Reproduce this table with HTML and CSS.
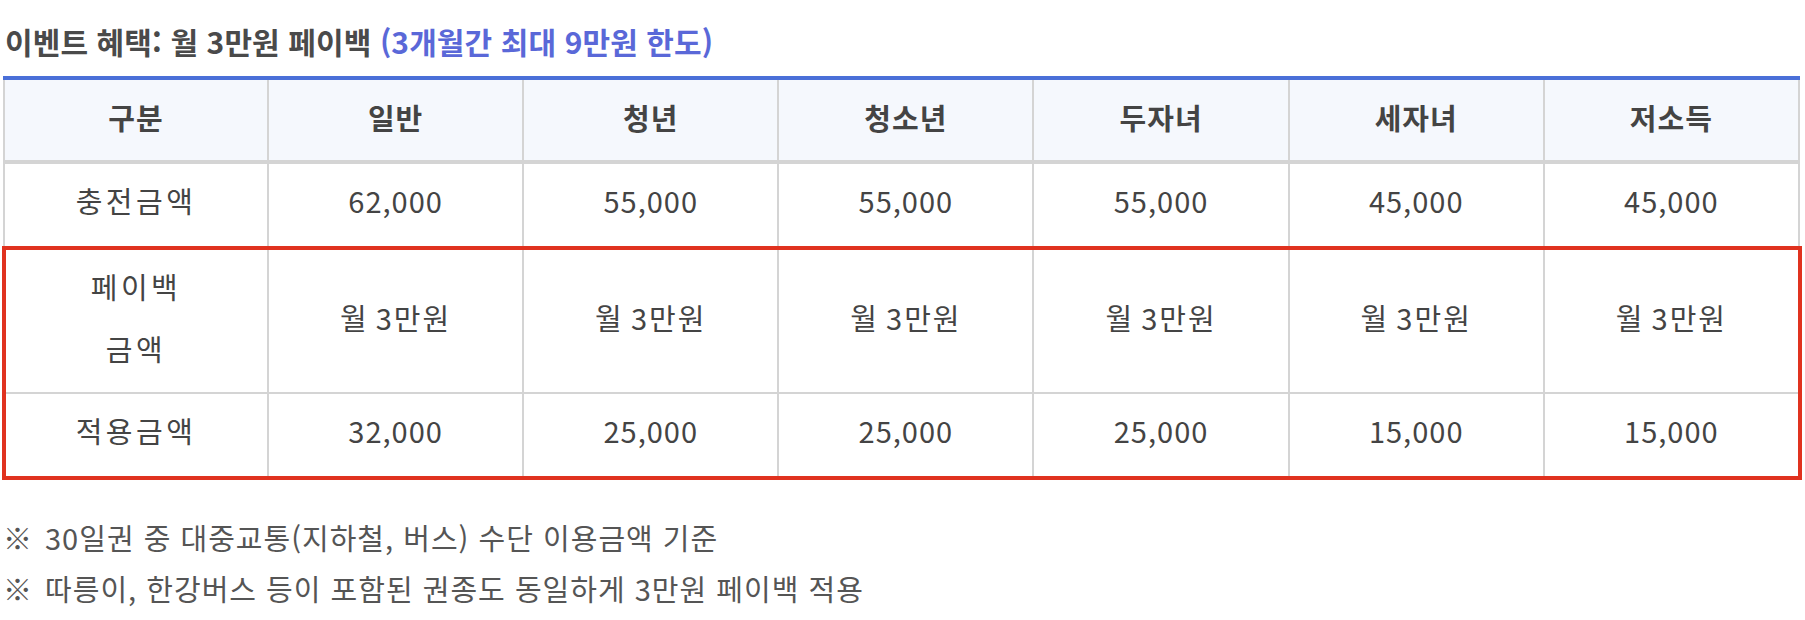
FILE: index.html
```html
<!DOCTYPE html>
<html lang="ko">
<head>
<meta charset="utf-8">
<title>이벤트 혜택</title>
<link rel="stylesheet" href="styles.css">
</head>
<body>
<div class="page">
  <h3 class="title">이벤트 혜택: 월 3만원 페이백 <span class="accent">(3개월간 최대 9만원 한도)</span></h3>
  <div class="table-wrap">
    <table class="benefit">
      <colgroup>
        <col class="col-first">
        <col><col><col><col><col><col>
      </colgroup>
      <thead>
        <tr>
          <th>구분</th><th>일반</th><th>청년</th><th>청소년</th><th>두자녀</th><th>세자녀</th><th>저소득</th>
        </tr>
      </thead>
      <tbody>
        <tr class="row-single">
          <td class="label">충전금액</td><td>62,000</td><td>55,000</td><td>55,000</td><td>55,000</td><td>45,000</td><td>45,000</td>
        </tr>
        <tr class="row-double">
          <td class="label">페이백<br>금액</td><td class="won">월 3만원</td><td class="won">월 3만원</td><td class="won">월 3만원</td><td class="won">월 3만원</td><td class="won">월 3만원</td><td class="won">월 3만원</td>
        </tr>
        <tr class="row-single">
          <td class="label">적용금액</td><td>32,000</td><td>25,000</td><td>25,000</td><td>25,000</td><td>15,000</td><td>15,000</td>
        </tr>
      </tbody>
    </table>
    <div class="highlight"></div>
  </div>
  <ul class="notes">
    <li><span class="mark">※</span>30일권 중 대중교통(지하철, 버스) 수단 이용금액 기준</li>
    <li><span class="mark">※</span>따릉이, 한강버스 등이 포함된 권종도 동일하게 3만원 페이백 적용</li>
  </ul>
</div>
</body>
</html>
```
FILE: styles.css
```css
* { box-sizing: border-box; }
html, body { margin: 0; padding: 0; background: #fff; }
body {
  font-family: "Noto Sans CJK KR", "Noto Sans", sans-serif;
  color: #444;
}
.page { padding: 21px 0 0 3px; }
.title {
  margin: 0 0 15px 2px;
  font-size: 30px;
  line-height: 40px;
  font-weight: 700;
  color: #4a4a4a;
  letter-spacing: 0.1px;
}
.title .accent { color: #5a68d8; }
.table-wrap { position: relative; width: 1798px; }
.benefit {
  width: 1797px;
  border-collapse: collapse;
  table-layout: fixed;
}
.col-first { width: 264px; }
.benefit th, .benefit td {
  border: 2px solid #d4d4d4;
  text-align: center;
  vertical-align: middle;
  padding: 7px 0 13px;
  line-height: 62px;
  font-size: 29px;
  color: #444;
  letter-spacing: 1px;
}
.benefit .row-single td { padding: 5px 0 15px; }
.benefit thead th {
  border-top: 4px solid #4a6fd8;
  border-bottom: 4px solid #d4d4d4;
  background: #f5f8fd;
  font-weight: 700;
  line-height: 60px;
  padding: 7px 0 13px;
  letter-spacing: 1px;
}
.benefit td { font-weight: 400; }
.benefit td.label { letter-spacing: 3.5px; }
.benefit td.won { letter-spacing: 2px; word-spacing: -3px; }
.highlight {
  position: absolute;
  left: -1px;
  top: 170px;
  width: 1800px;
  height: 234px;
  border: 4px solid #e0321f;
  pointer-events: none;
}
.notes {
  list-style: none;
  margin: 34px 0 0 0;
  padding: 0;
  font-size: 29px;
  line-height: 51px;
  color: #555;
  letter-spacing: 1px;
}
.notes .mark { margin-right: 12px; }
```
